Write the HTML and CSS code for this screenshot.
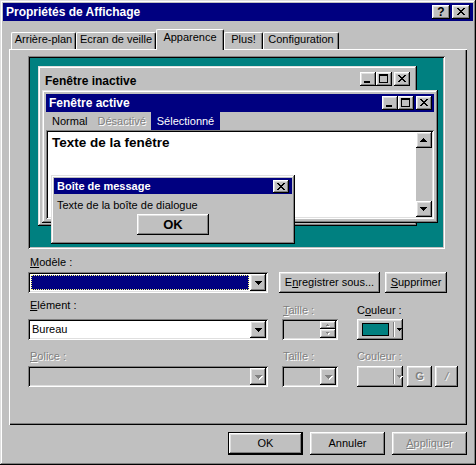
FILE: index.html
```html
<!DOCTYPE html>
<html lang="fr">
<head>
<meta charset="utf-8">
<title>Propriétés de Affichage</title>
<link rel="stylesheet" href="styles.css">
</head>
<body>
<div class="window">
  <div class="titlebar">
    <span class="title">Propriétés de Affichage</span>
    <div class="cap-btns">
      <span class="cbtn raised help">?</span>
      <span class="cbtn raised"><svg width="18" height="14" viewBox="0 0 18 14"><path transform="translate(5 3)" d="M0 0h2v1H0zM6 0h2v1H6zM1 1h2v1H1zM5 1h2v1H5zM2 2h4v1H2zM3 3h2v1H3zM2 4h4v1H2zM1 5h2v1H1zM5 5h2v1H5zM0 6h2v1H0zM6 6h2v1H6z"/></svg></span>
    </div>
  </div>

  <div class="tabs">
    <div class="tab t1">Arrière-plan</div>
    <div class="tab t2">Ecran de veille</div>
    <div class="tab t3 sel">Apparence</div>
    <div class="tab t4">Plus!</div>
    <div class="tab t5">Configuration</div>
  </div>

  <div class="panel">
    <div class="preview">
      <div class="pw inactive">
        <div class="pw-title">
          <span class="pw-caption">Fenêtre inactive</span>
          <div class="pw-btns">
            <span class="wbtn raised"><svg width="16" height="14" viewBox="0 0 16 14"><path d="M4 9h6v2H4z"/></svg></span>
            <span class="wbtn raised"><svg width="16" height="14" viewBox="0 0 16 14"><path fill-rule="evenodd" d="M3 2h9v9H3zM4 4v6h7V4z"/></svg></span>
            <span class="wbtn raised gap"><svg width="16" height="14" viewBox="0 0 16 14"><path transform="translate(4 3)" d="M0 0h2v1H0zM6 0h2v1H6zM1 1h2v1H1zM5 1h2v1H5zM2 2h4v1H2zM3 3h2v1H3zM2 4h4v1H2zM1 5h2v1H1zM5 5h2v1H5zM0 6h2v1H0zM6 6h2v1H6z"/></svg></span>
          </div>
        </div>
      </div>

      <div class="pw activewin">
        <div class="pw-title navy">
          <span class="pw-caption">Fenêtre active</span>
          <div class="pw-btns">
            <span class="wbtn raised"><svg width="16" height="14" viewBox="0 0 16 14"><path d="M4 9h6v2H4z"/></svg></span>
            <span class="wbtn raised"><svg width="16" height="14" viewBox="0 0 16 14"><path fill-rule="evenodd" d="M3 2h9v9H3zM4 4v6h7V4z"/></svg></span>
            <span class="wbtn raised gap"><svg width="16" height="14" viewBox="0 0 16 14"><path transform="translate(4 3)" d="M0 0h2v1H0zM6 0h2v1H6zM1 1h2v1H1zM5 1h2v1H5zM2 2h4v1H2zM3 3h2v1H3zM2 4h4v1H2zM1 5h2v1H1zM5 5h2v1H5zM0 6h2v1H0zM6 6h2v1H6z"/></svg></span>
          </div>
        </div>
        <div class="menubar">
          <span>Normal</span>
          <span class="dis">Désactivé</span>
          <span class="hi">Sélectionné</span>
        </div>
        <div class="textarea sunken">
          <div class="ta-text">Texte de la fenêtre</div>
          <div class="scroll">
            <span class="sbtn raised"><svg width="16" height="16" viewBox="0 0 16 16"><path d="M7 6h1v1H7zM6 7h3v1H6zM5 8h5v1H5zM4 9h7v1H4z"/></svg></span>
            <span class="sbtn raised"><svg width="16" height="16" viewBox="0 0 16 16"><path d="M4 6h7v1H4zM5 7h5v1H5zM6 8h3v1H6zM7 9h1v1H7z"/></svg></span>
          </div>
        </div>
      </div>

      <div class="pw msgbox">
        <div class="mb-title">
          <span class="mb-caption">Boîte de message</span>
          <span class="mbclose raised"><svg width="16" height="13" viewBox="0 0 16 13"><path transform="translate(4 3)" d="M0 0h2v1H0zM6 0h2v1H6zM1 1h2v1H1zM5 1h2v1H5zM2 2h4v1H2zM3 3h2v1H3zM2 4h4v1H2zM1 5h2v1H1zM5 5h2v1H5zM0 6h2v1H0zM6 6h2v1H6z"/></svg></span>
        </div>
        <div class="mb-text">Texte de la boîte de dialogue</div>
        <div class="mb-btnrow"><span class="btn raised mb-ok">OK</span></div>
      </div>
    </div>

    <div class="lbl-row r1">
      <span class="lbl l-main"><u>M</u>odèle :</span>
    </div>
    <div class="ctl-row c1">
      <div class="combo sunken">
        <div class="field selfield"></div>
        <span class="dd raised"><svg width="16" height="17" viewBox="0 0 16 17"><path d="M5 7h7v1H5zM6 8h5v1H6zM7 9h3v1H7zM8 10h1v1H8z"/></svg></span>
      </div>
      <span class="btn raised b-save">E<u>n</u>registrer sous...</span>
      <span class="btn raised b-del"><u>S</u>upprimer</span>
    </div>

    <div class="lbl-row r2">
      <span class="lbl l-main"><u>E</u>lément :</span>
      <span class="lbl l-size low dis-t"><u>T</u>aille :</span>
      <span class="lbl l-color low">C<u>o</u>uleur :</span>
    </div>
    <div class="ctl-row c2">
      <div class="combo sunken">
        <div class="field">Bureau</div>
        <span class="dd raised"><svg width="16" height="17" viewBox="0 0 16 17"><path d="M5 7h7v1H5zM6 8h5v1H6zM7 9h3v1H7zM8 10h1v1H8z"/></svg></span>
      </div>
      <div class="spin sunken">
        <div class="field"></div>
        <div class="spin-btns">
          <span class="raised"><svg width="16" height="8" viewBox="0 0 16 8"><path fill="#fff" d="M8 4h1v1H8zM7 5h3v1H7z"/><path fill="#808080" d="M7 3h1v1H7zM6 4h3v1H6z"/></svg></span>
          <span class="raised"><svg width="16" height="9" viewBox="0 0 16 9"><path fill="#fff" d="M7 4h3v1H7zM8 5h1v1H8z"/><path fill="#808080" d="M6 3h3v1H6zM7 4h1v1H7z"/></svg></span>
        </div>
      </div>
      <span class="colorbtn raised">
        <span class="swatch"></span>
        <span class="sep"></span>
        <svg width="5" height="3" viewBox="0 0 5 3"><path d="M0 0h5v1H0zM1 1h3v1H1zM2 2h1v1H2z"/></svg>
      </span>
    </div>

    <div class="lbl-row r3">
      <span class="lbl l-main dis-t"><u>P</u>olice :</span>
      <span class="lbl l-size dis-t">Taille :</span>
      <span class="lbl l-color dis-t">Couleur :</span>
    </div>
    <div class="ctl-row c3">
      <div class="combo sunken disabled">
        <div class="field"></div>
        <span class="dd raised"><svg width="16" height="17" viewBox="0 0 16 17"><path fill="#fff" d="M6 8h7v1H6zM7 9h5v1H7zM8 10h3v1H8zM9 11h1v1H9z"/><path fill="#808080" d="M5 7h7v1H5zM6 8h5v1H6zM7 9h3v1H7zM8 10h1v1H8z"/></svg></span>
      </div>
      <div class="combo sunken disabled small">
        <div class="field"></div>
        <span class="dd raised"><svg width="16" height="17" viewBox="0 0 16 17"><path fill="#fff" d="M6 8h7v1H6zM7 9h5v1H7zM8 10h3v1H8zM9 11h1v1H9z"/><path fill="#808080" d="M5 7h7v1H5zM6 8h5v1H6zM7 9h3v1H7zM8 10h1v1H8z"/></svg></span>
      </div>
      <span class="colorbtn raised off">
        <span class="swatch"></span>
        <span class="sep"></span>
        <svg width="6" height="4" viewBox="0 0 6 4"><path fill="#fff" d="M1 1h5v1H1zM2 2h3v1H2zM3 3h1v1H3z"/><path fill="#808080" d="M0 0h5v1H0zM1 1h3v1H1zM2 2h1v1H2z"/></svg>
      </span>
      <span class="btn raised sq-g dis-t">G</span>
      <span class="btn raised sq-i dis-t">/</span>
    </div>
  </div>

  <div class="footer">
    <span class="btn fbtn default">OK</span>
    <span class="btn fbtn raised">Annuler</span>
    <span class="btn fbtn raised dis-t"><u>A</u>ppliquer</span>
  </div>
</div>
</body>
</html>
```

FILE: styles.css
```css
* { box-sizing: border-box; }
html, body { margin: 0; padding: 0; }
body {
  width: 476px;
  height: 465px;
  overflow: hidden;
  background: #c0c0c0;
  font-family: "Liberation Sans", Arial, sans-serif;
  font-size: 11px;
  line-height: 13px;
  color: #000;
}
svg { display: block; shape-rendering: crispEdges; }
u { text-decoration: underline; text-underline-offset: 1px; }

.window {
  width: 476px;
  height: 465px;
  padding: 3px;
  display: flex;
  flex-direction: column;
  background: #c0c0c0;
  box-shadow: inset -1px -1px #000, inset 1px 1px #dfdfdf, inset -2px -2px #808080, inset 2px 2px #fff;
}
.raised {
  background: #c0c0c0;
  box-shadow: inset -1px -1px #000, inset 1px 1px #fff, inset -2px -2px #808080, inset 2px 2px #dfdfdf;
}
.sunken {
  box-shadow: inset 1px 1px #808080, inset -1px -1px #fff, inset 2px 2px #000, inset -2px -2px #dfdfdf;
}
.dis-t { color: #808080; text-shadow: 1px 1px 0 #fff; }

/* title bar */
.titlebar {
  flex: none;
  height: 18px;
  display: flex;
  align-items: center;
  padding: 0 3px;
  background: #000080;
  color: #fff;
}
.title { flex: 1; font-size: 12px; font-weight: bold; line-height: 18px; white-space: nowrap; }
.cap-btns { display: flex; gap: 2px; }
.cbtn { width: 18px; height: 14px; display: flex; align-items: center; justify-content: center; color: #000; }
.help { font-size: 12px; font-weight: bold; line-height: 14px; }

/* tabs */
.tabs {
  flex: none;
  height: 20px;
  margin-top: 8px;
  padding-left: 8px;
  display: flex;
  align-items: flex-end;
}
.tab {
  height: 17px;
  text-align: center;
  white-space: nowrap;
  background: #c0c0c0;
  border-top: 1px solid #fff;
  border-left: 1px solid #fff;
  border-right: 1px solid #000;
  border-radius: 2px 2px 0 0;
  box-shadow: inset -1px 0 #808080;
}
.tab.sel { height: 21px; margin-bottom: -1px; padding-top: 1px; position: relative; z-index: 1; }
.t1 { width: 65px; }
.t2 { width: 80px; }
.t3 { width: 68px; }
.t4 { width: 39px; }
.t5 { width: 76px; }

/* panel */
.panel {
  flex: none;
  height: 376px;
  margin: 0 6px;
  padding: 7px 0 0 19px;
  box-shadow: inset 1px 1px #fff, inset -1px -1px #000, inset -2px -2px #808080;
}

/* preview canvas */
.preview {
  position: relative;
  width: 417px;
  height: 193px;
  background: #008080;
  box-shadow: inset 1px 1px #808080, inset -1px -1px #fff, inset 2px 2px #000, inset -2px -2px #c0c0c0;
}
.pw {
  position: absolute;
  display: flex;
  flex-direction: column;
  padding: 4px;
  background: #c0c0c0;
  box-shadow: inset -1px -1px #000, inset 1px 1px #dfdfdf, inset -2px -2px #808080, inset 2px 2px #fff;
}
.inactive { left: 10px; top: 10px; width: 379px; height: 160px; }
.activewin { left: 14px; top: 34px; width: 396px; height: 133px; }
.msgbox { left: 23px; top: 119px; width: 244px; height: 69px; padding: 3px; }

.pw-title {
  flex: none;
  height: 18px;
  display: flex;
  align-items: center;
  padding: 0 2px 0 3px;
}
.inactive .pw-title { padding-right: 3px; }
.pw-caption { flex: 1; font-size: 12px; font-weight: bold; line-height: 18px; white-space: nowrap; }
.inactive .pw-caption { align-self: stretch; padding-top: 2px; }
.navy { background: #000080; color: #fff; }
.pw-btns { display: flex; }
.wbtn { width: 16px; height: 14px; }
.wbtn.gap { margin-left: 2px; }

.menubar { flex: none; height: 18px; display: flex; line-height: 18px; padding-left: 1px; }
.menubar span { padding: 0 5px; white-space: nowrap; }
.menubar .dis { color: #808080; text-shadow: 1px 1px 0 #fff; }
.menubar .hi { background: #000080; color: #fff; padding: 0 6px; }

.textarea { flex: 1; display: flex; padding: 2px; background: #fff; }
.ta-text { flex: 1; padding: 3px 0 0 4px; font-size: 13.5px; font-weight: bold; line-height: 16px; }
.scroll {
  width: 16px;
  display: flex;
  flex-direction: column;
  justify-content: space-between;
  background: #c0c0c0;
}
.sbtn { width: 16px; height: 16px; }

.mb-title {
  flex: none;
  height: 16px;
  display: flex;
  align-items: center;
  padding: 0 3px 0 3px;
  background: #000080;
  color: #fff;
  font-weight: bold;
}
.mb-caption { flex: 1; white-space: nowrap; }
.mbclose { width: 16px; height: 13px; }
.mb-text { margin-top: 5px; padding-left: 3px; white-space: nowrap; }
.mb-btnrow { display: flex; justify-content: center; margin-top: 2px; }
.mb-ok { width: 72px; height: 23px; font-size: 13px; font-weight: bold; }

/* form */
.lbl-row { display: flex; align-items: flex-start; }
.r1 { margin-top: 7px; }
.r2 { margin-top: 6px; }
.r3 { margin-top: 10px; }
.lbl { height: 13px; white-space: nowrap; }
.l-main { width: 254px; padding-left: 2px; }
.l-size { width: 75px; padding-left: 1px; }
.low { margin-top: 5px; }

.ctl-row { display: flex; height: 21px; }
.c1 { margin-top: 3px; }
.c2 { margin-top: 2px; }
.c3 { margin-top: 3px; }

.combo { width: 240px; height: 21px; display: flex; padding: 2px; background: #fff; }
.combo.disabled { background: #c0c0c0; }
.combo.small { width: 56px; margin-left: 14px; }
.field { flex: 1; line-height: 17px; padding-left: 2px; white-space: nowrap; }
.selfield { margin: 1px; background: #000080; border: 1px dotted #ffff80; }
.dd { width: 16px; height: 17px; flex: none; }

.btn { display: flex; align-items: center; justify-content: center; height: 21px; white-space: nowrap; }
.b-save { width: 101px; margin-left: 11px; }
.b-del { width: 62px; margin-left: 5px; }

.spin { width: 56px; margin-left: 14px; display: flex; padding: 2px; background: #c0c0c0; }
.spin-btns { width: 16px; display: flex; flex-direction: column; }
.spin-btns span { display: block; }

.colorbtn { width: 46px; height: 21px; margin-left: 19px; display: flex; align-items: center; padding-left: 5px; }
.swatch { width: 27px; height: 13px; background: #008080; border: 1px solid #000; flex: none; }
.colorbtn.off .swatch { visibility: hidden; }
.sep { width: 2px; height: 15px; margin-left: 4px; border-left: 1px solid #808080; border-right: 1px solid #fff; flex: none; }
.colorbtn svg { margin-left: 2px; }

.sq-g { width: 25px; margin-left: 4px; font-weight: bold; }
.sq-i { width: 23px; margin-left: 3px; font-style: italic; }

/* footer */
.footer { flex: none; display: flex; justify-content: flex-end; gap: 7px; margin-top: 7px; padding-right: 6px; }
.fbtn { width: 75px; height: 23px; }
.default {
  background: #c0c0c0;
  box-shadow: inset 0 0 0 1px #000, inset -2px -2px #000, inset 2px 2px #fff, inset -3px -3px #808080, inset 3px 3px #dfdfdf;
}
```
